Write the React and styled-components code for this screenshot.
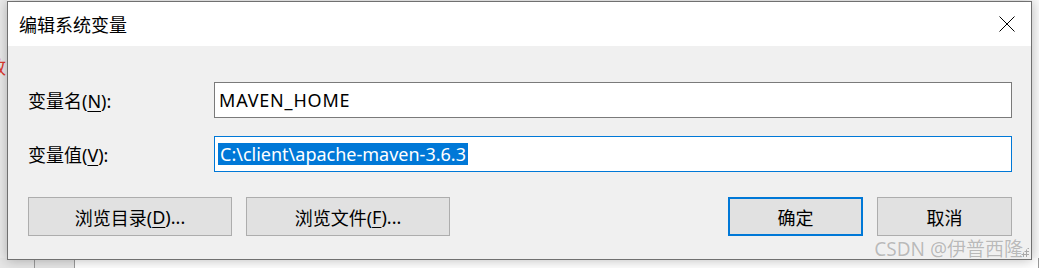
import React from 'react';
import styled, { createGlobalStyle } from 'styled-components';

const GlobalStyle = createGlobalStyle`
  html, body {
    margin: 0;
    padding: 0;
  }
  body {
    width: 1039px;
    height: 268px;
    overflow: hidden;
    background: #ffffff;
    font-family: "Noto Sans", "Noto Sans CJK SC", sans-serif;
  }
`;

const Desktop = styled.div`
  position: relative;
  width: 1039px;
  height: 268px;
  overflow: hidden;
  background: #fbfbfb;
`;

const LeftStrip = styled.div`
  position: absolute;
  left: 0;
  top: 0;
  width: 7px;
  height: 268px;
  background: #ebebeb;
  overflow: hidden;
`;

const RedGlyph = styled.span`
  position: absolute;
  left: -12px;
  top: 56px;
  font-size: 18px;
  line-height: 20px;
  color: #e03a2e;
  font-family: "Noto Sans CJK SC", sans-serif;
`;

const BackTable = styled.div`
  position: absolute;
  left: 0;
  top: 258px;
  width: 1039px;
  height: 10px;
  display: grid;
  grid-template-columns: 35px 40px 1fr;
  background: #f4f4f4;
`;

const BackCell = styled.div`
  border-right: 1px solid #9a9a9a;
  background: ${p => (p.$light ? '#ffffff' : '#e6e6e6')};
`;

const Dialog = styled.div`
  position: absolute;
  left: 7px;
  top: 1px;
  width: 1025px;
  box-sizing: border-box;
  border: 1px solid #707070;
  background: #f0f0f0;
  box-shadow: 0 0 12px rgba(0, 0, 0, 0.28);
  display: flex;
  flex-direction: column;
`;

const TitleBar = styled.div`
  height: 44px;
  background: #ffffff;
  display: flex;
  align-items: center;
  justify-content: space-between;
  padding: 0 16px 0 11px;
`;

const Title = styled.span`
  font-family: "Noto Sans CJK SC", sans-serif;
  font-size: 18px;
  color: #000;
  line-height: 24px;
  margin-top: -1px;
`;

const CloseIcon = () => (
  <svg width="16" height="16" viewBox="0 0 16 16" style={{ display: 'block' }}>
    <path d="M0.5 0.5 L15.5 15.5 M15.5 0.5 L0.5 15.5" stroke="#000" strokeWidth="1" />
  </svg>
);

const Body = styled.div`
  padding: 36px 19px 23px 20px;
  display: flex;
  flex-direction: column;
`;

const Form = styled.div`
  display: grid;
  grid-template-columns: 186px 1fr;
  row-gap: 18px;
  align-items: center;
`;

const Label = styled.label`
  font-size: 18px;
  color: #000;
  line-height: 24px;
  padding-top: 2px;
  u {
    text-decoration-thickness: 1px;
    text-underline-offset: 3px;
  }
`;

const Field = styled.div`
  height: 36px;
  box-sizing: border-box;
  border: 1px solid ${p => (p.$focused ? '#0078d7' : '#7a7a7a')};
  background: #ffffff;
  display: flex;
  align-items: center;
  padding: 0 3px;
  font-size: 18px;
  color: #000;
  white-space: nowrap;
`;

const Selected = styled.span`
  background: #0078d7;
  color: #ffffff;
  line-height: 22px;
  padding: 0 2px;
`;

const Value = styled.span`
  padding-left: 1px;
  line-height: 22px;
  letter-spacing: 0.8px;
`;

const ButtonRow = styled.div`
  margin-top: 25px;
  display: flex;
  align-items: center;
`;

const Button = styled.div`
  box-sizing: border-box;
  width: ${p => p.$w}px;
  height: 39px;
  background: #e1e1e1;
  border: ${p => (p.$default ? '2px solid #0078d7' : '1px solid #adadad')};
  display: flex;
  align-items: center;
  justify-content: center;
  font-size: 18px;
  color: #000;
  margin-right: ${p => p.$mr || 0}px;
  u {
    text-decoration-thickness: 1px;
    text-underline-offset: 3px;
  }
`;

const Spacer = styled.div`
  flex: 1;
`;

const Watermark = styled.div`
  position: absolute;
  right: 8px;
  bottom: -1px;
  font-size: 19px;
  line-height: 22px;
  color: rgba(120, 120, 120, 0.5);
  text-shadow: 0 0 1px rgba(255, 255, 255, 0.9);
  pointer-events: none;
`;

const Grip = styled.div`
  position: absolute;
  right: 2px;
  bottom: 2px;
  width: 10px;
  height: 10px;
  background-image: radial-gradient(circle, #a9a9a9 1px, transparent 1.2px);
  background-size: 3px 3px;
  clip-path: polygon(100% 0, 100% 100%, 0 100%);
`;

const App = () => (
  <>
    <GlobalStyle />
    <Desktop>
      <LeftStrip>
        <RedGlyph>致</RedGlyph>
      </LeftStrip>
      <BackTable>
        <BackCell />
        <BackCell />
        <BackCell $light />
      </BackTable>
      <Dialog>
        <TitleBar>
          <Title>编辑系统变量</Title>
          <CloseIcon />
        </TitleBar>
        <Body>
          <Form>
            <Label>变量名(<u>N</u>):</Label>
            <Field>
              <Value>MAVEN_HOME</Value>
            </Field>
            <Label>变量值(<u>V</u>):</Label>
            <Field $focused>
              <Selected>C:\client\apache-maven-3.6.3</Selected>
            </Field>
          </Form>
          <ButtonRow>
            <Button $w={204} $mr={14}>浏览目录(<u>D</u>)...</Button>
            <Button $w={204}>浏览文件(<u>F</u>)...</Button>
            <Spacer />
            <Button $w={135} $mr={14} $default>确定</Button>
            <Button $w={135}>取消</Button>
          </ButtonRow>
        </Body>
        <Grip />
        <Watermark>CSDN @伊普西隆</Watermark>
      </Dialog>
    </Desktop>
  </>
);

export default App;
